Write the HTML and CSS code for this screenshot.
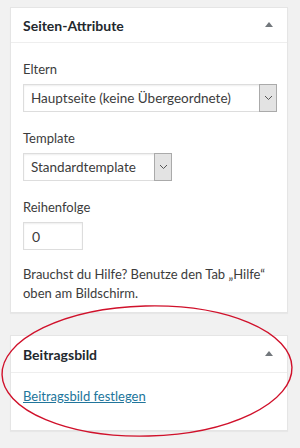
FILE: index.html
```html
<!DOCTYPE html>
<html lang="de">
<head>
    <meta charset="UTF-8">
    <meta name="viewport" content="width=device-width, initial-scale=1.0">
    <title>Seiten-Attribute</title>
    <link rel="stylesheet" href="styles.css">
</head>
<body>
<div class="sidebar">
    <div class="postbox">
        <div class="postbox-header">
            <h2>Seiten-Attribute</h2>
            <span class="toggle"></span>
        </div>
        <div class="inside">
            <p class="label">Eltern</p>
            <div class="select select-wide">
                <span class="select-value">Hauptseite (keine Übergeordnete)</span>
                <span class="select-arrow">
                    <svg width="9" height="6" viewBox="0 0 9 6"><path d="M1 1l3.5 3.5L8 1" fill="none" stroke="#555" stroke-width="1"/></svg>
                </span>
            </div>
            <p class="label">Template</p>
            <div class="select select-small">
                <span class="select-value">Standardtemplate</span>
                <span class="select-arrow">
                    <svg width="9" height="6" viewBox="0 0 9 6"><path d="M1 1l3.5 3.5L8 1" fill="none" stroke="#555" stroke-width="1"/></svg>
                </span>
            </div>
            <p class="label">Reihenfolge</p>
            <div class="text-input">0</div>
            <p class="help">Brauchst du Hilfe? Benutze den Tab „Hilfe“ oben am Bildschirm.</p>
        </div>
    </div>

    <div class="postbox">
        <div class="postbox-header header-tall">
            <h2>Beitragsbild</h2>
            <span class="toggle"></span>
        </div>
        <div class="inside inside-thumb">
            <a href="#">Beitragsbild festlegen</a>
        </div>
    </div>
</div>

<!-- red marker round the featured image box -->
<svg class="marker" width="300" height="148" viewBox="0 0 300 148">
    <ellipse cx="147" cy="71" rx="145" ry="65" fill="none" stroke="#d0112b" stroke-width="1.4" transform="rotate(-1.5 147 71)"/>
</svg>
</body>
</html>
```

FILE: styles.css
```css
body {
    margin: 0;
    background: #f1f1f1;
    font-family: Lato, "Noto Sans", sans-serif;
    color: #3c3c3c;
    font-size: 13px;
    position: relative;
    height: 448px;
    overflow: hidden;
}
.sidebar {
    width: 278px;
    padding: 7px 0 0 10px;
}
.postbox {
    background: #fff;
    border: 1px solid #e5e5e5;
    box-shadow: 0 1px 1px rgba(0, 0, 0, 0.04);
    box-sizing: border-box;
    margin-bottom: 22px;
}
.postbox-header {
    display: flex;
    align-items: center;
    justify-content: space-between;
    height: 34px;
    padding: 0 14px 0 12px;
    border-bottom: 1px solid #eee;
}
.header-tall {
    height: 36px;
}
.postbox-header h2 {
    margin: 0;
    font-size: 14px;
    font-weight: 700;
    color: #23282d;
}
.toggle {
    width: 0;
    height: 0;
    border-left: 4px solid transparent;
    border-right: 4px solid transparent;
    border-bottom: 5px solid #72777c;
    margin-top: -1px;
}
.inside {
    padding: 17px 12px 0 12px;
    height: 269px;
    box-sizing: border-box;
}
.inside-thumb {
    height: 57px;
    padding-top: 14px;
}
.label {
    margin: 0 0 6px;
    line-height: 18px;
}
.select {
    display: flex;
    border: 1px solid #ddd;
    box-shadow: inset 0 1px 2px rgba(0, 0, 0, 0.07);
    height: 28px;
    box-sizing: border-box;
    font-size: 13.5px;
    margin-bottom: 17px;
}
.select-wide {
    width: 254px;
}
.select-small {
    width: 149px;
}
.select-value {
    flex: 1;
    padding-left: 7px;
    line-height: 26px;
    white-space: nowrap;
    overflow: hidden;
}
.select-arrow {
    width: 16px;
    margin: -1px -1px -1px 0;
    background: #e3e3e3;
    border: 1px solid #aaa;
    display: flex;
    align-items: center;
    justify-content: center;
}
.text-input {
    width: 60px;
    height: 28px;
    box-sizing: border-box;
    border: 1px solid #ddd;
    box-shadow: inset 0 1px 2px rgba(0, 0, 0, 0.07);
    padding-left: 8px;
    line-height: 28px;
    font-size: 14px;
}
.help {
    margin: 15px 0 0;
    line-height: 19px;
}
a {
    display: inline-block;
    line-height: 18px;
    color: #21759b;
    font-size: 13px;
}
.marker {
    position: absolute;
    left: 0;
    top: 300px;
}
```
